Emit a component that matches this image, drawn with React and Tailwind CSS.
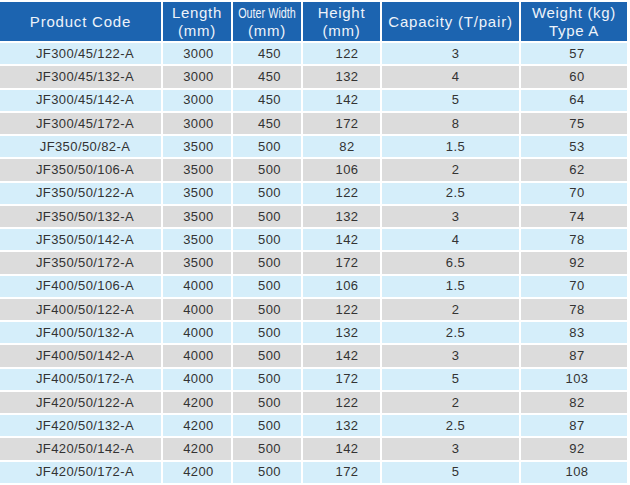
import React from 'react';

const rows = [
  ['JF300/45/122-A', '3000', '450', '122', '3', '57'],
  ['JF300/45/132-A', '3000', '450', '132', '4', '60'],
  ['JF300/45/142-A', '3000', '450', '142', '5', '64'],
  ['JF300/45/172-A', '3000', '450', '172', '8', '75'],
  ['JF350/50/82-A', '3500', '500', '82', '1.5', '53'],
  ['JF350/50/106-A', '3500', '500', '106', '2', '62'],
  ['JF350/50/122-A', '3500', '500', '122', '2.5', '70'],
  ['JF350/50/132-A', '3500', '500', '132', '3', '74'],
  ['JF350/50/142-A', '3500', '500', '142', '4', '78'],
  ['JF350/50/172-A', '3500', '500', '172', '6.5', '92'],
  ['JF400/50/106-A', '4000', '500', '106', '1.5', '70'],
  ['JF400/50/122-A', '4000', '500', '122', '2', '78'],
  ['JF400/50/132-A', '4000', '500', '132', '2.5', '83'],
  ['JF400/50/142-A', '4000', '500', '142', '3', '87'],
  ['JF400/50/172-A', '4000', '500', '172', '5', '103'],
  ['JF420/50/122-A', '4200', '500', '122', '2', '82'],
  ['JF420/50/132-A', '4200', '500', '132', '2.5', '87'],
  ['JF420/50/142-A', '4200', '500', '142', '3', '92'],
  ['JF420/50/172-A', '4200', '500', '172', '5', '108'],
];

// small per-column nudge, body text sits a little right of centre
const pads = ['pl-[9px]', 'pl-[3px]', 'pl-[5px]', 'pl-[11px]', 'pl-[10px]', 'pl-[6px]'];

const Head = ({ children }) => (
  <div className="bg-[#1c64b0] text-[#eef3fa] font-normal flex flex-col items-center justify-center text-[15px] leading-[18px] tracking-[0.7px] text-center">
    {children}
  </div>
);

export default function App() {
  return (
    <div
      className="w-[630px] h-[485px] bg-white pt-[2px] overflow-hidden"
      style={{ fontFamily: '"Liberation Sans", Arial, sans-serif' }}
    >
      <div className="grid grid-cols-[161px_68px_68px_77px_137px_106px] grid-rows-[39px_repeat(19,21.25px)] gap-[2px]">
        <Head>
          <span className="tracking-[0.8px]">Product Code</span>
        </Head>
        <Head>
          <span>Length</span>
          <span>(mm)</span>
        </Head>
        <Head>
          <span className="inline-block whitespace-nowrap scale-x-[0.72] tracking-normal">Outer Width</span>
          <span>(mm)</span>
        </Head>
        <Head>
          <span>Height</span>
          <span>(mm)</span>
        </Head>
        <Head>
          <span className="tracking-[0.8px]">Capacity (T/pair)</span>
        </Head>
        <Head>
          <span>Weight (kg)</span>
          <span>Type A</span>
        </Head>

        {rows.map((r, i) =>
          r.map((cell, j) => (
            <div
              key={i + '-' + j}
              className={`flex items-center justify-center text-[13px] tracking-[0.4px] text-[#333333] ${pads[j]} ${
                i % 2 === 0 ? 'bg-[#d5eefa]' : 'bg-[#dcdcdc]'
              }`}
            >
              {cell}
            </div>
          ))
        )}
      </div>
    </div>
  );
}
